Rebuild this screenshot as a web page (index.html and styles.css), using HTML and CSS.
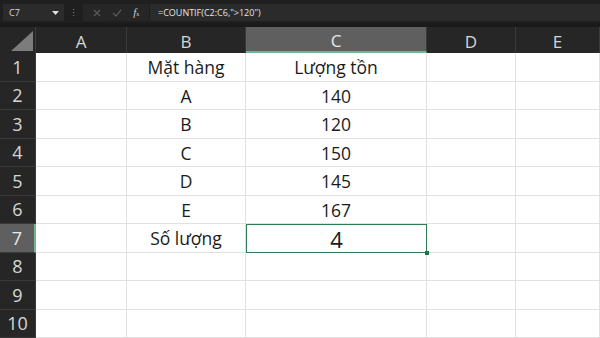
FILE: index.html
```html
<!DOCTYPE html>
<html lang="vi">
<head>
    <meta charset="UTF-8">
    <link rel="stylesheet" href="styles.css">
    <title>COUNTIF</title>
</head>
<body>
<div class="topbar">
    <div class="namebox">
        <span>C7</span>
        <svg width="7" height="4" viewBox="0 0 7 4"><path d="M0 0h7L3.5 4z" fill="#e0e0e0"/></svg>
    </div>
    <div class="dots">⋮</div>
    <div class="tools">
        <svg width="8" height="8" viewBox="0 0 8 8"><path d="M1 1l6 6M7 1L1 7" stroke="#5a5a5a" stroke-width="1.2"/></svg>
        <svg width="10" height="8" viewBox="0 0 10 8"><path d="M1 4l3 3 5-6" stroke="#5a5a5a" stroke-width="1.2" fill="none"/></svg>
        <span class="fx"><i>f</i><small>x</small></span>
    </div>
    <div class="formula">=COUNTIF(C2:C6,"&gt;120")</div>
</div>

<div class="sheet">
    <div class="corner"><div class="tri"></div></div>
    <div class="colhead">A</div>
    <div class="colhead">B</div>
    <div class="colhead sel">C</div>
    <div class="colhead">D</div>
    <div class="colhead">E</div>

    <div class="rowhead">1</div><div class="cell"></div><div class="cell">Mặt hàng</div><div class="cell">Lượng tồn</div><div class="cell"></div><div class="cell"></div>
    <div class="rowhead">2</div><div class="cell"></div><div class="cell">A</div><div class="cell">140</div><div class="cell"></div><div class="cell"></div>
    <div class="rowhead">3</div><div class="cell"></div><div class="cell">B</div><div class="cell">120</div><div class="cell"></div><div class="cell"></div>
    <div class="rowhead">4</div><div class="cell"></div><div class="cell">C</div><div class="cell">150</div><div class="cell"></div><div class="cell"></div>
    <div class="rowhead">5</div><div class="cell"></div><div class="cell">D</div><div class="cell">145</div><div class="cell"></div><div class="cell"></div>
    <div class="rowhead">6</div><div class="cell"></div><div class="cell">E</div><div class="cell">167</div><div class="cell"></div><div class="cell"></div>
    <div class="rowhead sel">7</div><div class="cell"></div><div class="cell">Số lượng</div><div class="cell active">4<span class="handle"></span></div><div class="cell"></div><div class="cell"></div>
    <div class="rowhead">8</div><div class="cell"></div><div class="cell"></div><div class="cell"></div><div class="cell"></div><div class="cell"></div>
    <div class="rowhead">9</div><div class="cell"></div><div class="cell"></div><div class="cell"></div><div class="cell"></div><div class="cell"></div>
    <div class="rowhead">10</div><div class="cell"></div><div class="cell"></div><div class="cell"></div><div class="cell"></div><div class="cell"></div>
</div>
</body>
</html>
```

FILE: styles.css
```css
* {
    margin: 0;
    padding: 0;
    box-sizing: border-box;
}

body {
    width: 600px;
    height: 338px;
    overflow: hidden;
    background: #1f1f1f;
    font-family: "Open Sans", "Liberation Sans", sans-serif;
}

.topbar {
    height: 27px;
    display: flex;
    align-items: flex-start;
    padding-top: 4px;
    padding-left: 3px;
    border-bottom: 4px solid #1a1a1a;
}

.namebox {
    width: 61px;
    height: 17px;
    background: #2b2b2b;
    display: flex;
    align-items: center;
    justify-content: space-between;
    padding: 0 5px 0 6px;
    color: #d8d8d8;
    font-size: 9px;
}

.dots {
    width: 19px;
    text-align: center;
    color: #8a8a8a;
    font-size: 9px;
    line-height: 17px;
}

.tools {
    width: 66px;
    height: 17px;
    background: #262626;
    display: flex;
    align-items: center;
    justify-content: space-around;
    padding: 0 4px;
}

.fx {
    color: #cfcfcf;
    font-family: "Liberation Serif", serif;
    font-size: 11px;
    line-height: 10px;
}

.fx small {
    font-size: 6px;
    font-style: normal;
}

.formula {
    flex: 1;
    height: 17px;
    margin-left: 1px;
    background: #2b2b2b;
    color: #e4e4e4;
    font-size: 9px;
    line-height: 17px;
    padding-left: 8px;
}

.sheet {
    display: grid;
    grid-template-columns: 36px 91px 119px 181px 89px 84px;
    grid-template-rows: 26px repeat(10, 28.5px);
    background: #fff;
}

.corner {
    background: #262626;
    border-right: 1px solid #3a3a3a;
    display: flex;
    justify-content: flex-end;
    align-items: flex-end;
    padding: 0 2px 2px 0;
}

.tri {
    width: 22px;
    height: 20px;
    background: #7c7c7c;
    clip-path: polygon(100% 0, 100% 100%, 0 100%);
}

.colhead {
    background: #262626;
    color: #d6d6d6;
    font-size: 17px;
    display: flex;
    align-items: center;
    justify-content: center;
    border-right: 1px solid #3a3a3a;
    padding-top: 2px;
}

.colhead.sel {
    background: #5f5f5f;
    color: #e8e8e8;
    border-bottom: 2px solid #6fb595;
}

.rowhead {
    background: #262626;
    color: #d6d6d6;
    font-size: 18px;
    display: flex;
    align-items: center;
    justify-content: center;
    border-bottom: 1px solid #3a3a3a;
    border-right: 1px solid #3a3a3a;
}

.rowhead.sel {
    background: #5f5f5f;
    color: #e8e8e8;
    border-right: 2px solid #6fb595;
}

.cell {
    border-right: 1px solid #e1e1e1;
    border-bottom: 1px solid #e1e1e1;
    color: #1b1b1b;
    font-size: 17.5px;
    display: flex;
    align-items: center;
    justify-content: center;
    padding-top: 1px;
}

.cell.active {
    position: relative;
    border: 1px solid #2f7a52;
    font-size: 22px;
    box-shadow: inset 0 0 0 1px #fff;
}

.handle {
    position: absolute;
    right: -3px;
    bottom: -3px;
    width: 4px;
    height: 4px;
    background: #2f6b4a;
}
```
